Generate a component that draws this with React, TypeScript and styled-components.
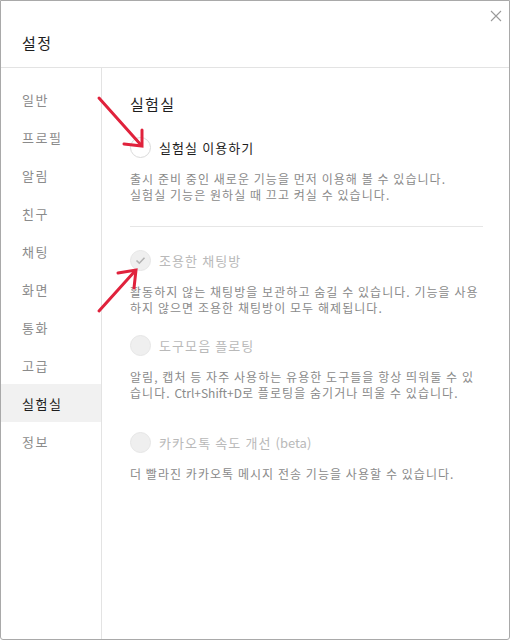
import styled, { createGlobalStyle } from "styled-components";

const GlobalStyle = createGlobalStyle`
  html, body {
    margin: 0;
    padding: 0;
    background: #ffffff;
  }
  body {
    font-family: "Noto Sans CJK KR", "Noto Sans", sans-serif;
    -webkit-font-smoothing: antialiased;
  }
`;

const Window = styled.div`
  position: relative;
  width: 510px;
  height: 640px;
  box-sizing: border-box;
  border: 1px solid #a9a9a9;
  border-radius: 0 0 3px 3px;
  background: #fff;
  display: flex;
  flex-direction: column;
  overflow: hidden;
`;

const Header = styled.header`
  height: 67px;
  box-sizing: border-box;
  border-bottom: 1px solid #e3e3e3;
  padding: 32px 0 0 21px;
`;

const Title = styled.h1`
  margin: 0;
  font-size: 15px;
  line-height: 20px;
  font-weight: 400;
  letter-spacing: 1.5px;
  color: #1e1e1e;
`;

const CloseButton = styled.button`
  position: absolute;
  top: 8px;
  right: 6px;
  width: 14px;
  height: 14px;
  padding: 0;
  border: 0;
  background: none;
  cursor: pointer;
  display: flex;
  align-items: center;
  justify-content: center;
`;

const Body = styled.div`
  flex: 1;
  display: flex;
`;

const Sidebar = styled.nav`
  width: 100px;
  border-right: 1px solid #e3e3e3;
  padding-top: 12px;
`;

const NavItem = styled.div<{ $active?: boolean }>`
  height: 38px;
  display: flex;
  align-items: center;
  padding-left: 21px;
  font-size: 13px;
  letter-spacing: 1.5px;
  color: ${(p) => (p.$active ? "#1e1e1e" : "#8b8b8b")};
  background: ${(p) => (p.$active ? "#f1f1f1" : "transparent")};
  cursor: pointer;
`;

const Main = styled.main`
  flex: 1;
  padding: 26px 26px 0 28px;
`;

const Heading = styled.h2`
  margin: 0;
  font-size: 15px;
  line-height: 20px;
  font-weight: 400;
  letter-spacing: 1.3px;
  color: #1e1e1e;
`;

const Option = styled.section<{ $top: number }>`
  margin-top: ${(p) => p.$top}px;
`;

const Row = styled.label`
  display: flex;
  align-items: center;
  gap: 8px;
  height: 22px;
  cursor: pointer;
`;

const Radio = styled.span<{ $variant: "empty" | "checked" | "disabled" }>`
  width: 21px;
  height: 21px;
  box-sizing: border-box;
  border-radius: 50%;
  flex-shrink: 0;
  display: flex;
  align-items: center;
  justify-content: center;
  border: 1px solid
    ${(p) => (p.$variant === "empty" ? "#dadada" : "#e6e6e6")};
  background: ${(p) => (p.$variant === "empty" ? "#fff" : "#efefef")};
`;

const Label = styled.span<{ $disabled?: boolean }>`
  font-size: 13px;
  letter-spacing: 1.1px;
  color: ${(p) => (p.$disabled ? "#b9b9b9" : "#1e1e1e")};
`;

const Desc = styled.p`
  margin: 13px 0 0;
  font-size: 12px;
  line-height: 16px;
  letter-spacing: 1.05px;
  color: #8a8a8a;
`;

// Latin runs keep their natural spacing inside the Korean text
const Latin = styled.span`
  letter-spacing: 0;
`;

const Divider = styled.hr`
  margin: 23px 0 0;
  border: 0;
  height: 1px;
  background: #e6e6e6;
`;

const Annotations = styled.svg`
  position: absolute;
  left: 0;
  top: 0;
  pointer-events: none;
`;

const navItems = ["일반", "프로필", "알림", "친구", "채팅", "화면", "통화", "고급", "실험실", "정보"];

const CheckMark = () => (
  <svg width="11" height="9" viewBox="0 0 11 9">
    <path d="M1.5 4.5 L4.3 7.2 L9.5 1.8" fill="none" stroke="#b3b3b3" strokeWidth="1.6" />
  </svg>
);

const App = () => {
  return (
    <>
      <GlobalStyle />
      <Window>
        <Header>
          <Title>설정</Title>
        </Header>
        <CloseButton aria-label="닫기">
          <svg width="12" height="12" viewBox="0 0 12 12">
            <path d="M1 1 L11 11 M11 1 L1 11" stroke="#9a9a9a" strokeWidth="1.1" />
          </svg>
        </CloseButton>
        <Body>
          <Sidebar>
            {navItems.map((item) => (
              <NavItem key={item} $active={item === "실험실"}>
                {item}
              </NavItem>
            ))}
          </Sidebar>
          <Main>
            <Heading>실험실</Heading>
            <Option $top={22}>
              <Row>
                <Radio $variant="empty" />
                <Label>실험실 이용하기</Label>
              </Row>
              <Desc>
                출시 준비 중인 새로운 기능을 먼저 이용해 볼 수 있습니다.
                <br />
                실험실 기능은 원하실 때 끄고 켜실 수 있습니다.
              </Desc>
            </Option>
            <Divider />
            <Option $top={22}>
              <Row>
                <Radio $variant="checked">
                  <CheckMark />
                </Radio>
                <Label $disabled>조용한 채팅방</Label>
              </Row>
              <Desc>
                활동하지 않는 채팅방을 보관하고 숨길 수 있습니다. 기능을 사용하지 않으면 조용한 채팅방이 모두 해제됩니다.
              </Desc>
            </Option>
            <Option $top={18}>
              <Row>
                <Radio $variant="disabled" />
                <Label $disabled>도구모음 플로팅</Label>
              </Row>
              <Desc>
                알림, 캡처 등 자주 사용하는 유용한 도구들을 항상 띄워둘 수 있습니다. <Latin>Ctrl+Shift+D</Latin>로 플로팅을 숨기거나 띄울 수 있습니다.
              </Desc>
            </Option>
            <Option $top={30}>
              <Row>
                <Radio $variant="disabled" />
                <Label $disabled>
                  카카오톡 속도 개선 <Latin>(beta)</Latin>
                </Label>
              </Row>
              <Desc>더 빨라진 카카오톡 메시지 전송 기능을 사용할 수 있습니다.</Desc>
            </Option>
          </Main>
        </Body>
        <Annotations width="510" height="640" viewBox="0 0 510 640">
          <g stroke="#e0223c" strokeWidth="3" strokeLinecap="round" fill="none">
            <path d="M98 97 L140 144" />
            <path d="M141 129 L141 145 L123 143" />
            <path d="M98 310 L134 270" />
            <path d="M117 272 L135 269 L133 287" />
          </g>
        </Annotations>
      </Window>
    </>
  );
};

export default App;
